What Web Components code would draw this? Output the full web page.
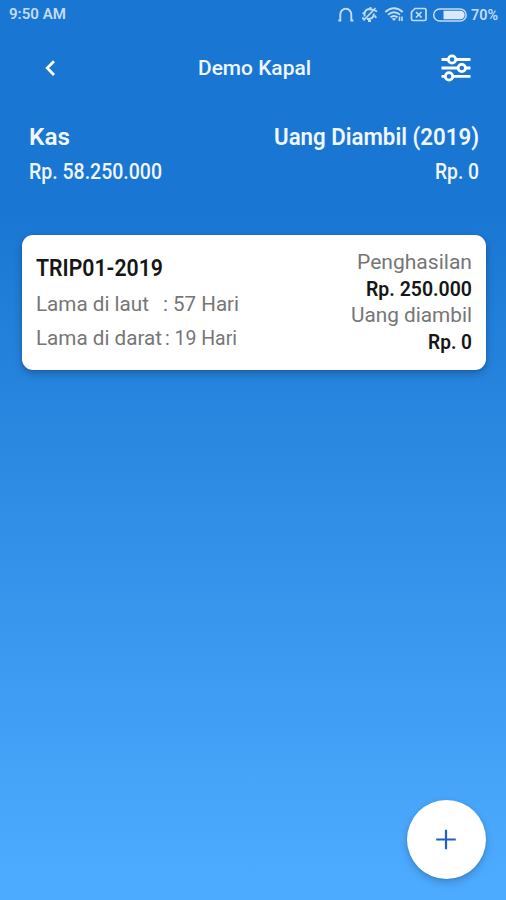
<!DOCTYPE html>
<html lang="id">
<head>
<meta charset="utf-8">
<title>Demo Kapal</title>
<style>
html,body{margin:0;height:100%}
body{font-family:Roboto,"Liberation Sans",sans-serif;overflow:hidden}
</style>
</head>
<body>
<kapal-app></kapal-app>
<script>
// A single line of text condensed or widened to a set width.
class FitText extends HTMLElement {
  connectedCallback() {
    const w = +this.getAttribute('w'), size = this.getAttribute('size');
    const root = this.attachShadow({mode: 'open'});
    root.innerHTML = `<style>
      :host{display:block;width:${w}px;height:${this.getAttribute('h')}px;line-height:${this.getAttribute('h')}px;
        font-size:${size}px;font-weight:${this.getAttribute('weight') || 400};white-space:nowrap}
      span{display:inline-block;transform-origin:0 50%}
      </style><span><slot></slot></span>`;
    const span = root.querySelector('span');
    const natural = span.getBoundingClientRect().width;
    if (natural) span.style.transform = `scaleX(${w / natural})`;
  }
}

class StatusBar extends HTMLElement {
  connectedCallback() {
    this.attachShadow({mode: 'open'}).innerHTML = `<style>
      :host{display:flex;justify-content:space-between;align-items:center;height:30px;padding:0 8px 0 9px;color:#c5dcf6}
      svg{display:block;width:132px;height:20px}
      .r{display:flex;align-items:center;gap:3px}
      </style>
      <fit-text w="57" h="30" size="14.5" weight="600">9:50 AM</fit-text>
      <div class="r">
      <svg viewBox="336 5 132 20" fill="none" stroke="#c5dcf6" stroke-width="1.9">
        <path d="M340.300 20.500v-6a5.500 5.700 0 0 1 11 0v6M338.300 20.500h3M350.400 20.500h3"/>
        <g stroke-width="1.900"><path d="M364.600 16.500q-1-7 4.900-7.500 2.500 0 4 1.700M373.800 13.500q.2 5-4.800 5.500h-2M362 18.300l2.500 .3M374 10l3 1.500M375 15.500l1 2.500M362.500 13l2 .5M370.500 7v2M368 21h3"/>
        <path d="M363.500 20.500l12-12.500" stroke-width="1.700"/></g>
        <path d="M385.300 12q8.700-7.400 17.400 0M388 14.700q6-4.800 12 0M390.500 17.300q3.500-2.600 7 0" stroke-width="2"/>
        <path d="M391.500 18.300l2.500 2.700 2.500-2.700z" fill="#c5dcf6" stroke="none"/>
        <path d="M399.500 21v-4.500M402 21v-4.500" stroke-width="1.600"/>
        <path d="M415 8.500h9.500q1.500 0 1.500 1.500v9q0 1.500-1.500 1.500h-11.500q-1.500 0-1.500-1.500v-7zM416 12l5.500 5.500M421.500 12l-5.500 5.500" stroke-width="1.700"/>
        <rect x="433.700" y="9" width="32.500" height="12" rx="6" stroke-width="1.500"/>
        <path d="M443.500 10.800h17a4.200 4.200 0 0 1 0 8.400h-17z" fill="#d9e8fa" stroke="none"/>
      </svg>
      <fit-text w="27" h="30" size="14" weight="600">70%</fit-text>
      </div>`;
  }
}

class AppHeader extends HTMLElement {
  connectedCallback() {
    this.attachShadow({mode: 'open'}).innerHTML = `<style>
      :host{display:grid;grid-template-columns:1fr auto 1fr;align-items:center;height:76px;padding:0 34px 0 43px;color:#f0f6fd;box-sizing:border-box}
      svg{display:block}
      .end{justify-self:end}
      fit-text{margin-right:6px}
      </style>
      <svg width="14" height="20" viewBox="0 0 14 20" fill="none" stroke="#fff" stroke-width="2.800"><path d="M11 3.300L4.200 10.100l6.800 6.800"/></svg>
      <fit-text w="113" h="28" size="21" weight="500"><slot></slot></fit-text>
      <svg class="end" width="32" height="30" viewBox="0 0 32 30" fill="#1976d2" stroke="#fff" stroke-width="2.800">
        <path d="M1.500 6.500h29M1.500 15h29M1.500 23.400h29"/>
        <circle cx="12" cy="6.500" r="3.700"/><circle cx="21.800" cy="15" r="3.700"/><circle cx="9" cy="23.400" r="3.700"/>
      </svg>`;
  }
}

class CashSummary extends HTMLElement {
  connectedCallback() {
    this.attachShadow({mode: 'open'}).innerHTML = `<style>
      :host{display:flex;justify-content:space-between;padding:16px 27px 0 29px;height:111px;box-sizing:border-box;color:#f0f6fd}
      .c{display:flex;flex-direction:column;gap:3px}
      .c.e{align-items:flex-end}
      </style>
      <div class="c"><fit-text w="41" h="30" size="24" weight="600">Kas</fit-text>
        <fit-text w="133" h="34" size="21.5" weight="500">Rp. 58.250.000</fit-text></div>
      <div class="c e"><fit-text w="205" h="30" size="24" weight="600">Uang Diambil (2019)</fit-text>
        <fit-text w="44" h="34" size="21.5" weight="500">Rp. 0</fit-text></div>`;
  }
}

class TripCard extends HTMLElement {
  connectedCallback() {
    this.attachShadow({mode: 'open'}).innerHTML = `<style>
      :host{display:flex;justify-content:space-between;margin:0 20px 0 21.500px;height:135px;border-radius:11px;background:#fff;
        padding:13.500px 14px 0;box-sizing:border-box;color:#767676;box-shadow:0 4px 9px rgba(0,0,0,.22),0 1px 3px rgba(0,0,0,.12)}
      .b{color:#161616}
      .row{display:flex}
      .right{display:flex;flex-direction:column;align-items:flex-end}
      </style>
      <div>
        <fit-text class="b" w="127" h="40" size="23.5" weight="600">TRIP01-2019</fit-text>
        <div class="row" style="gap:14px"><fit-text w="113" h="33" size="20.500">Lama di laut</fit-text><fit-text w="76" h="33" size="20.500">: 57 Hari</fit-text></div>
        <div class="row" style="gap:3px"><fit-text w="126" h="34" size="20.500">Lama di darat</fit-text><fit-text w="72" h="34" size="20.500">: 19 Hari</fit-text></div>
      </div>
      <div class="right">
        <fit-text w="115" h="28" size="20.500">Penghasilan</fit-text>
        <fit-text class="b" w="106" h="26" size="21" weight="600">Rp. 250.000</fit-text>
        <fit-text w="121" h="27" size="20.500">Uang diambil</fit-text>
        <fit-text class="b" w="44" h="26" size="21" weight="600">Rp. 0</fit-text>
      </div>`;
  }
}

class AddButton extends HTMLElement {
  connectedCallback() {
    this.attachShadow({mode: 'open'}).innerHTML = `<style>
      :host{display:grid;place-items:center;width:79px;height:79px;border-radius:50%;background:#fff;
        box-shadow:0 4px 8px rgba(0,0,0,.18),0 1px 3px rgba(0,0,0,.1)}
      svg{display:block}
      </style>
      <svg width="21" height="21" viewBox="0 0 21 21" stroke="#1f5fca" stroke-width="2.200"><path d="M10 .7v19.600M.2 10.500h19.600"/></svg>`;
  }
}

class KapalApp extends HTMLElement {
  connectedCallback() {
    this.attachShadow({mode: 'open'}).innerHTML = `<style>
      :host{display:flex;flex-direction:column;height:900px;padding-bottom:21px;box-sizing:border-box;
        background:linear-gradient(#1976d2 0,#1976d2 210px,#4dabff 880px)}
      cash-summary{margin-bottom:17.500px}
      add-button{margin:auto 20px 0 auto}
      </style>
      <status-bar></status-bar>
      <app-header>Demo Kapal</app-header>
      <cash-summary></cash-summary>
      <trip-card></trip-card>
      <add-button></add-button>`;
  }
}
customElements.define('fit-text', FitText);
customElements.define('status-bar', StatusBar);
customElements.define('app-header', AppHeader);
customElements.define('cash-summary', CashSummary);
customElements.define('trip-card', TripCard);
customElements.define('add-button', AddButton);
customElements.define('kapal-app', KapalApp);
</script>
</body>
</html>
